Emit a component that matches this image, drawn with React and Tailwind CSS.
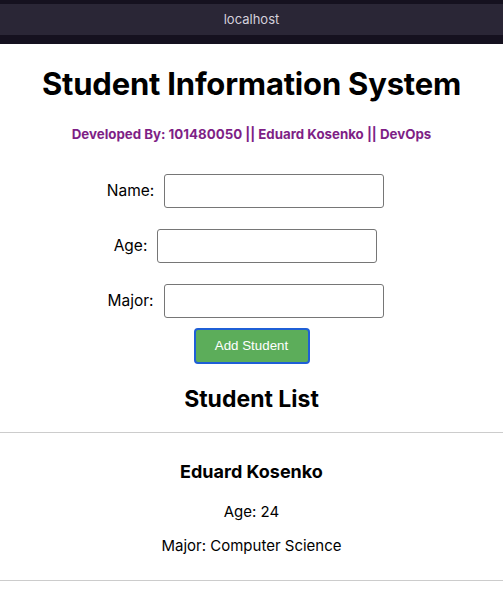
export default function App() {
  const students = [{ name: 'Eduard Kosenko', age: 24, major: 'Computer Science' }]

  return (
    <div className="min-h-screen bg-white text-black" style={{ fontFamily: 'Inter, "Noto Sans", sans-serif' }}>
      {/* Browser bar */}
      <div className="h-[44px] bg-[#15111f] pt-[4px]">
        <div className="h-[31px] bg-[#2a2636] flex items-center justify-center">
          <span className="text-[13px] text-[#d4d0dc]">localhost</span>
        </div>
      </div>

      <div className="flex flex-col items-center">
        <h1 className="mt-[20px] h-[40px] leading-[40px] text-[31px] font-bold tracking-[-0.2px]">
          Student Information System
        </h1>
        <p className="mt-[20px] h-[20px] leading-[20px] text-[13.3px] font-bold text-[#7e1f86]">
          Developed By: 101480050 || Eduard Kosenko || DevOps
        </p>

        {/* Form */}
        <div className="mt-[30px] flex flex-col items-center">
          <div className="flex items-center gap-[10px] pr-[12px]">
            <label className="text-[15.5px]">Name:</label>
            <input className="w-[220px] h-[34px] border border-[#767676] rounded-[3px] px-2" />
          </div>
          <div className="mt-[21px] flex items-center gap-[10px] pr-[12px]">
            <label className="text-[15.5px]">Age:</label>
            <input className="w-[220px] h-[34px] border border-[#767676] rounded-[3px] px-2" />
          </div>
          <div className="mt-[21px] flex items-center gap-[10px] pr-[12px]">
            <label className="text-[15.5px]">Major:</label>
            <input className="w-[220px] h-[34px] border border-[#767676] rounded-[3px] px-2" />
          </div>
          <button className="mt-[10px] w-[116px] h-[36px] rounded-[4px] border-2 border-[#1f5fd6] bg-[#5cad5a] text-white text-[13.33px]" style={{ fontFamily: '"Liberation Sans", Arial, sans-serif' }}>
            Add Student
          </button>
        </div>

        <h2 className="mt-[20px] h-[30px] leading-[30px] text-[23px] font-bold">Student List</h2>
      </div>

      {/* List */}
      <div className="mt-[18px]">
        {students.map((s, i) => (
          <div key={i} className="border-t border-b border-[#cccccc] flex flex-col items-center">
            <h3 className="mt-[27px] h-[24px] leading-[24px] text-[18px] font-bold">{s.name}</h3>
            <p className="mt-[18px] h-[20px] leading-[20px] text-[15px]">Age: {s.age}</p>
            <p className="mt-[14px] h-[20px] leading-[20px] text-[15px]">Major: {s.major}</p>
            <div className="h-[24px]" />
          </div>
        ))}
      </div>
    </div>
  )
}
